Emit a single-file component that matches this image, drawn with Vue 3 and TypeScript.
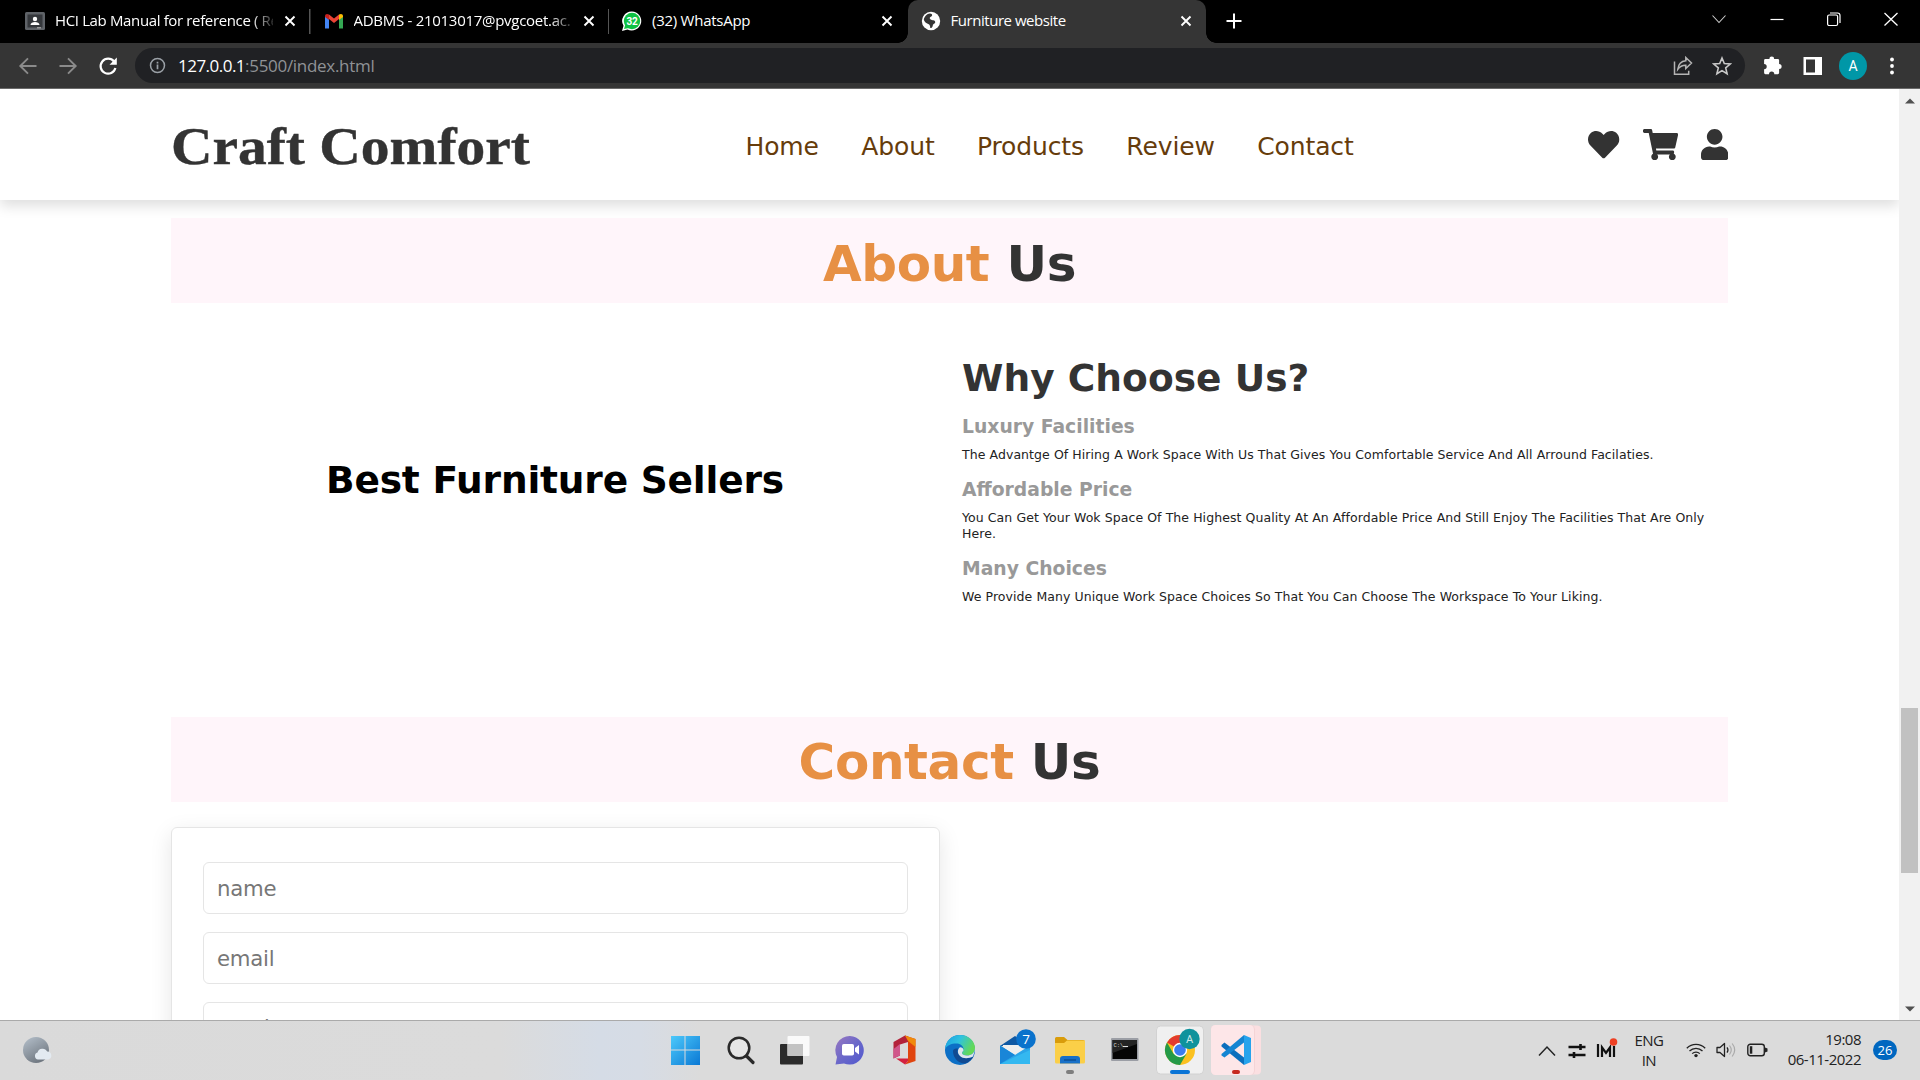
<script setup lang="ts">
interface Tab { title: string; icon: string; cls: string; active?: boolean }
const tabs: Tab[] = [
  { title: 'HCI Lab Manual for reference ( Re', icon: 'class', cls: 't1' },
  { title: 'ADBMS - 21013017@pvgcoet.ac.', icon: 'gmail', cls: 't2' },
  { title: '(32) WhatsApp', icon: 'whatsapp', cls: 't3' },
  { title: 'Furniture website', icon: 'globe', cls: 't4', active: true },
]
const links = ['Home', 'About', 'Products', 'Review', 'Contact']
const reasons = [
  { title: 'Luxury Facilities', text: 'The Advantge Of Hiring A Work Space With Us That Gives You Comfortable Service And All Arround Facilaties.' },
  { title: 'Affordable Price', text: 'You Can Get Your Wok Space Of The Highest Quality At An Affordable Price And Still Enjoy The Facilities That Are Only Here.' },
  { title: 'Many Choices', text: 'We Provide Many Unique Work Space Choices So That You Can Choose The Workspace To Your Liking.' },
]
const fields = ['name', 'email', 'number']
</script>

<template>
  <div class="screen">
    <div class="tabstrip">
      <div v-for="t in tabs" :key="t.title" class="tab" :class="[t.cls, { active: t.active }]">
        <svg class="fav" viewBox="0 0 20 20">
          <g v-if="t.icon === 'class'"><rect x="0" y="1" width="20" height="18" rx="1.5" fill="#5f6368"/><rect x="2.5" y="3.5" width="15" height="13" fill="#34373b"/><circle cx="10" cy="8" r="2.2" fill="#fff"/><path d="M5.5 14c0-4 9-4 9 0z" fill="#fff"/><rect x="12" y="16" width="4" height="1.5" fill="#999"/></g>
          <g v-else-if="t.icon === 'gmail'"><path d="M1 17.5V5l4 3v9.5z" fill="#4285f4"/><path d="M15 17.5V8l4-3v12.500z" fill="#34a853"/><path d="M5 8V3.600l5 3.900 5-3.900V8l-5 4z" fill="#ea4335"/><path d="M1 6V5C1 2.800 3.300 2.300 5 3.600V9z" fill="#c5221f"/><path d="M19 6V5c0-2.200-2.300-2.700-4-1.400V9z" fill="#fbbc04"/></g>
          <g v-else-if="t.icon === 'whatsapp'"><path d="M10 .5a9.500 9.500 0 1 1-4.500 18L0 20l1.500-5.200A9.500 9.500 0 0 1 10 .5z" fill="#fff"/><circle cx="10" cy="10" r="8.200" fill="#0fc143"/><path d="M2 18l1.500-5 3.500 4z" fill="#0fc143"/><text x="10" y="13.600" font-size="10" font-weight="700" text-anchor="middle" fill="#fff" font-family="Roboto, sans-serif">32</text></g>
          <g v-else><circle cx="10" cy="10" r="9.200" fill="#fff"/><path d="M9 2.500c3 .5 2.500 2.500.8 3.200-1.800.8-1 2-.2 2.700 1.500 1 4.500.2 4.600 2.600.1 2-2.200 1.600-2.400 3.400-.1 1.600-1.800 3.200-2.600 2.400 0-1.800-.4-3.200-2-3.800-2-.8-3.600-2-4.400-4.200C3.300 5.500 6 2.400 9 2.500z" fill="#353535"/></g>
        </svg>
        <span class="title">{{ t.title }}</span>
        <svg class="x" viewBox="0 0 12 12"><path d="M1.500 1.500l9 9M10.500 1.500l-9 9" stroke="#fff" stroke-width="1.900"/></svg>
      </div>
      <svg class="plus" viewBox="0 0 16 16"><path d="M8 .5v15M.5 8h15" stroke="#fff" stroke-width="2"/></svg>
      <div class="winctl">
        <svg viewBox="0 0 16 16"><path d="M1.500 4.500L8 11.500l6.500-7" fill="none" stroke="#ccc" stroke-width="1.100"/></svg>
        <svg viewBox="0 0 16 16"><path d="M1.500 8.500h13" stroke="#fff" stroke-width="1.200"/></svg>
        <svg viewBox="0 0 16 16"><rect x="1.600" y="4" width="10" height="10.500" rx="1.500" fill="none" stroke="#fff" stroke-width="1.200"/><path d="M4 2h7.500q2.500 0 2.500 2.500V12" fill="none" stroke="#fff" stroke-width="1.200"/></svg>
        <svg viewBox="0 0 16 16"><path d="M1.500 2l13 12.500M14.500 2L1.500 14.500" stroke="#fff" stroke-width="1.300"/></svg>
      </div>
    </div>

    <div class="toolbar">
      <svg class="tb back" viewBox="0 0 20 20"><path d="M18.500 10H2.500M10 2.300L2.300 10l7.700 7.700" fill="none" stroke="#8b8b8b" stroke-width="1.900"/></svg>
      <svg class="tb fwd" viewBox="0 0 20 20"><path d="M1.500 10h16M10 2.300l7.700 7.700-7.700 7.700" fill="none" stroke="#8b8b8b" stroke-width="1.900"/></svg>
      <svg class="tb rel" viewBox="0 0 20 20"><path d="M16 5.500A7.500 7.500 0 1 0 17.400 12" fill="none" stroke="#fff" stroke-width="2.200"/><path d="M18.800 1.500v7.300h-7.300z" fill="#fff"/></svg>
      <div class="omni">
        <svg class="info" viewBox="0 0 18 18"><circle cx="9" cy="9" r="7.400" fill="none" stroke="#9aa0a6" stroke-width="1.600"/><path d="M9 8v5M9 5v1.800" stroke="#9aa0a6" stroke-width="1.800"/></svg>
        <span class="host">127.0.0.1</span><span class="path">:5500/index.html</span>
        <svg class="share" viewBox="0 0 20 20"><path d="M1.500 5.500v12.700h14.200v-3.500" fill="none" stroke="#b4b4b4" stroke-width="1.500"/><path d="M12.800 1.500l5.700 5.500-5.700 5.500V9.300c-3.500-.1-5.700 1-8 4 .5-4.500 3-8 8-8.500z" fill="none" stroke="#b4b4b4" stroke-width="1.500"/></svg>
        <svg class="star" viewBox="0 0 20 20"><path d="M10 2l2.300 5.500 6 .5-4.600 3.900 1.400 5.800L10 14.600l-5.100 3.100 1.400-5.800L1.700 8l6-.5z" fill="none" stroke="#c8c8c8" stroke-width="1.600"/></svg>
      </div>
      <svg class="puz" viewBox="0 0 20 20"><path d="M7 3.800a2.300 2.300 0 0 1 4.600 0H15a1.300 1.300 0 0 1 1.300 1.300v3.500a2.400 2.400 0 0 1 0 4.800V17a1.300 1.300 0 0 1-1.300 1.300h-3.300a2.500 2.500 0 0 0-5 0H3.300A1.300 1.300 0 0 1 2 17v-3.500a2.500 2.500 0 0 0 0-5V5.100a1.300 1.300 0 0 1 1.300-1.300z" fill="#fff"/></svg>
      <svg class="side" viewBox="0 0 20 20"><path d="M.5 1h18.500v18H.5zM3 3.500v13h9v-13z" fill="#fff" fill-rule="evenodd"/></svg>
      <div class="avatar">A</div>
      <svg class="dots" viewBox="0 0 6 20"><g fill="#fff"><circle cx="3" cy="3.500" r="1.900"/><circle cx="3" cy="10" r="1.900"/><circle cx="3" cy="16.500" r="1.900"/></g></svg>
    </div>

    <div class="viewport">
      <div class="page">
        <header class="header">
          <div class="logo"><span>Craft Comfort</span></div>
          <nav class="nav"><a v-for="l in links" :key="l">{{ l }}</a></nav>
          <div class="icons">
            <svg width="31.250" height="31.250" viewBox="0 0 512 512"><path fill="#333" d="M462.3 62.6C407.5 15.9 326 24.3 275.7 76.2L256 96.500l-19.700-20.300C186.100 24.300 104.500 15.900 49.700 62.600c-62.800 53.600-66.100 149.800-9.900 207.900l193.500 199.800c12.500 12.900 32.800 12.900 45.300 0l193.500-199.800c56.300-58.100 53-154.300-9.800-207.900z"/></svg>
            <svg width="35.160" height="31.250" viewBox="0 0 576 512"><path fill="#333" d="M528.12 301.319l47.273-208C578.806 78.301 567.391 64 551.99 64H159.208l-9.166-44.81C147.758 8.021 137.93 0 126.529 0H24C10.745 0 0 10.745 0 24v16c0 13.255 10.745 24 24 24h69.883l70.248 343.435C147.325 417.1 136 435.222 136 456c0 30.928 25.072 56 56 56s56-25.072 56-56c0-15.674-6.447-29.835-16.824-40h209.647C430.447 426.165 424 440.326 424 456c0 30.928 25.072 56 56 56s56-25.072 56-56c0-22.172-12.888-41.332-31.579-50.405l5.517-24.276c3.413-15.018-8.002-29.319-23.403-29.319H218.117l-6.545-32h293.145c11.206 0 20.92-7.754 23.403-18.681z"/></svg>
            <svg width="27.340" height="31.250" viewBox="0 0 448 512"><path fill="#333" d="M224 256c70.700 0 128-57.300 128-128S294.700 0 224 0 96 57.300 96 128s57.300 128 128 128zm89.600 32h-16.700c-22.200 10.200-46.900 16-72.900 16s-50.600-5.800-72.900-16h-16.700C60.200 288 0 348.200 0 422.400V464c0 26.500 21.500 48 48 48h352c26.500 0 48-21.500 48-48v-41.600c0-74.200-60.200-134.400-134.400-134.400z"/></svg>
          </div>
        </header>

        <main class="main">
          <h1 class="heading about-h"><span>About</span> Us</h1>
          <section class="about">
            <div class="seller"><h3>Best Furniture Sellers</h3></div>
            <div class="why">
              <h3>Why Choose Us?</h3>
              <template v-for="r in reasons" :key="r.title">
                <h4>{{ r.title }}</h4>
                <p>{{ r.text }}</p>
              </template>
            </div>
          </section>
          <h1 class="heading contact-h"><span>Contact</span> Us</h1>
          <form class="card">
            <input v-for="f in fields" :key="f" type="text" :placeholder="f" />
          </form>
        </main>
      </div>
      <div class="scroll">
        <svg viewBox="0 0 10 6"><path d="M0 5.500L5 .5l5 5z" fill="#505050"/></svg>
        <div class="thumb"></div>
        <svg viewBox="0 0 10 6"><path d="M0 .5l5 5 5-5z" fill="#505050"/></svg>
      </div>
    </div>

    <footer class="taskbar">
      <svg class="weather" viewBox="0 0 30 30"><defs><linearGradient id="moon" x1="0" y1="0" x2=".6" y2="1"><stop offset="0" stop-color="#b6c1cc"/><stop offset="1" stop-color="#6f7780"/></linearGradient></defs><circle cx="13" cy="15" r="13" fill="url(#moon)"/><path d="M15 24.500a3.600 3.600 0 0 1-.5-7 5.200 5.200 0 0 1 9.700-.9 4 4 0 0 1 1 7.900z" fill="#e3eaf1"/></svg>
      <div class="apps">
        <svg class="app" viewBox="0 0 48 50"><defs><linearGradient id="win" x1="0" y1="0" x2="1" y2="1"><stop offset="0" stop-color="#4cc9fb"/><stop offset="1" stop-color="#0a78d4"/></linearGradient></defs><path d="M10 11h13.500v13.500H10zM24.500 11H39v13.500H24.500zM10 25.500h13.500V40H10zM24.500 25.500H39V40H24.500z" fill="url(#win)"/></svg>
        <svg class="app" viewBox="0 0 48 50"><circle cx="23" cy="23" r="10.300" fill="#e6e6e6" stroke="#2a2a2a" stroke-width="2.500"/><path d="M30.500 31l6.500 6.500" stroke="#2a2a2a" stroke-width="3.200" stroke-linecap="round"/></svg>
        <svg class="app" viewBox="0 0 48 50"><rect x="9" y="19" width="23" height="20.500" rx="1" fill="#2b2b2b"/><rect x="16.500" y="11" width="22" height="20" rx="1" fill="#fafafa"/><path d="M16.500 19H32v12H16.500z" fill="#c3c3c3"/></svg>
        <svg class="app" viewBox="0 0 48 50"><defs><linearGradient id="chat" x1="0" y1="0" x2="1" y2="1"><stop offset="0" stop-color="#9a78c0"/><stop offset=".5" stop-color="#6b68c9"/><stop offset="1" stop-color="#5058cf"/></linearGradient></defs><path d="M24 11a14.300 14.300 0 1 1-6 27.500L9.500 39.500l1.500-7.500A14.300 14.300 0 0 1 24 11z" fill="url(#chat)"/><rect x="16" y="19" width="12" height="11.500" rx="1.800" fill="#fff"/><path d="M29 23l4-3v9.500l-4-3z" fill="#fff"/></svg>
        <svg class="app" viewBox="0 0 48 50"><path d="M12.500 17L24 10.500l3 1V17l-8 2.500v11l-6.500 3z" fill="#b3223a"/><path d="M12.500 24v9.500l6.500-3V19z" fill="#d0568a"/><path d="M24 10.500l10.500 3.500v22L24 39.500l3-3.500V15z" fill="#e0440e"/><path d="M24 10.500l10.500 3.500v8L27 16z" fill="#f08a0b"/><path d="M15 33.500h12V36l-3 3.500z" fill="#d4213f"/></svg>
        <svg class="app" viewBox="0 0 48 50"><defs><linearGradient id="edg" x1="0" y1="0" x2="1" y2=".4"><stop offset="0" stop-color="#1b9de2"/><stop offset=".5" stop-color="#2fc2df"/><stop offset="1" stop-color="#63d957"/></linearGradient></defs><circle cx="24" cy="25" r="15" fill="#0c6fc6"/><path d="M9 24C10 15 16 10 24 10c9 0 15 6.500 15 13 0 5-4 7.500-8 7.500-3 0-5-1-5-2.500s1.500-1.500 1.500-4c0-3-3-5.500-7-5.500-5.500 0-9.500 2-11.500 5.500z" fill="url(#edg)"/><path d="M17 26c0 7 5.500 12.500 12 12.500 3.500-1 7-4 8.500-7-4 2-10 2.500-13.500-.5-2.500-2.200-3-4.800-2-7.500-3 0-5 .5-5 2.500z" fill="#114a92"/><path d="M26 28c0 1.500 2 2.500 5 2.500 4 0 8-2.500 8-7.500v2l-2 6.500c-4 2-10 2.500-13-.5-3-2.800-2.500-7 0-8.700 2 0 3.500 1.200 3.500 2.700 0 1.500-1.500 1.500-1.500 3z" fill="#dfe5ec"/></svg>
        <svg class="app" viewBox="0 0 48 50"><path d="M9 21l15-10 15 10z" fill="#0f59a4"/><path d="M12 20h24v13H12z" fill="#eee"/><path d="M9 20.500l15 9.500L39 20.500V39H9z" fill="#2aa5e8"/><path d="M9 39l30-14v14z" fill="#34b8f0"/><path d="M9 20.500l15 9.500L9 39z" fill="#1986d8"/><circle cx="35" cy="14" r="9.800" fill="#0a72cc"/><text x="35" y="18.700" text-anchor="middle" font-size="13.500" fill="#fff" font-family="Open Sans, sans-serif">7</text></svg>
        <svg class="app" viewBox="0 0 48 50"><path d="M9 13.500q0-1.500 1.500-1.500h7.500l3.500 3H37q2 0 2 2v6H9z" fill="#d99c0b"/><path d="M9 18h9l3-2.500h18V37q0 1.500-1.500 1.500h-27Q9 38.500 9 37z" fill="#fbcf48"/><path d="M14 38.500V34q0-3 3-3h14q3 0 3 3v4.500z" fill="#1870c8"/><path d="M18 35h12" stroke="#0b4f96" stroke-width="1.500"/><rect x="20" y="45" width="8" height="4" rx="2" fill="#7e7e7e"/></svg>
        <svg class="app" viewBox="0 0 48 50"><rect x="10" y="13" width="27.500" height="23" rx="1" fill="#9b9ea5"/><rect x="11.500" y="15" width="24.500" height="19" fill="#050505"/><path d="M11.500 15H36v4l-24.500 9z" fill="#242424"/><text x="12.500" y="21.500" font-size="5.500" fill="#ddd" font-family="Liberation Mono, monospace">C:\</text><path d="M22 21.500h5" stroke="#ddd"/></svg>
        <svg class="app" viewBox="0 0 48 50"><rect x=".5" y="1" width="47" height="48" rx="4" fill="#f0f0f0" stroke="#d2d2d2"/><circle cx="24" cy="25" r="15" fill="#fbc11f"/><path d="M24 25L11 17.500A15 15 0 0 1 37 17.500H24z" fill="#e33b2e"/><path d="M11 17.500A15 15 0 0 0 24 40l6.500-11.300L24 25l-6.500 3.700z" fill="#249a48"/><circle cx="24" cy="25" r="7.200" fill="#fff"/><circle cx="24" cy="25" r="5.800" fill="#3a7df0"/><circle cx="33.500" cy="14" r="10.200" fill="#0e929c"/><text x="33.500" y="18" text-anchor="middle" font-size="11" fill="#cfe9ea" font-family="Roboto, sans-serif">A</text><rect x="14" y="45" width="20" height="4" rx="2" fill="#0a74d6"/></svg>
        <svg class="app code" viewBox="0 0 51 50"><rect x="38" y=".5" width="12" height="49" rx="4" fill="#fbdfe1"/><rect x="0" y="0" width="44" height="50" rx="4.500" fill="#f4d4d6"/><rect x="0" y="0" width="43" height="50" rx="4.500" fill="#fde6e8"/><path d="M33 10l7 3v24l-7 3z" fill="#27a3ec"/><path d="M10.500 20l3-2.500L33 32.500V40L10.500 21.500z" fill="#0b6fbd"/><path d="M10.500 30.500V29L33 10v7.500L13.500 32.500z" fill="#1585d2"/><rect x="21" y="45" width="8" height="4" rx="2" fill="#c62a20"/></svg>
      </div>
      <div class="tray">
        <svg class="chev" viewBox="0 0 18 12"><path d="M1 10.500L9 2l8 8.500" fill="none" stroke="#222" stroke-width="1.500"/></svg>
        <svg class="slid" viewBox="0 0 18 16"><path d="M.5 4h17M.5 12h17" stroke="#111" stroke-width="2.400"/><path d="M12.500 1v6M6 9v6" stroke="#111" stroke-width="2.600"/></svg>
        <svg class="imi" viewBox="0 0 22 20"><path d="M2 6v13M18 8v11" stroke="#111" stroke-width="2.200"/><path d="M6 19V9.500l4 5.500 4-5.500V19" fill="none" stroke="#111" stroke-width="2.200"/><circle cx="17.500" cy="4" r="3.800" fill="#ee4023"/></svg>
        <div class="lang">ENG<br />IN</div>
        <svg class="wifi" viewBox="0 0 20 16"><g fill="none" stroke="#222" stroke-width="1.300"><path d="M.8 6.200a13 13 0 0 1 18.400 0"/><path d="M3.500 9a9.200 9.200 0 0 1 13 0"/><path d="M6.200 11.600a5.400 5.400 0 0 1 7.600 0"/></g><circle cx="10" cy="13.600" r="1.700" fill="#222"/></svg>
        <svg class="vol" viewBox="0 0 21 16"><path d="M1 5.500h3L8.500 1.500v13L4 10.500H1z" fill="none" stroke="#222" stroke-width="1.300" stroke-linejoin="round"/><path d="M11 5.300q2 2.700 0 5.400" fill="none" stroke="#222" stroke-width="1.200"/><path d="M13.500 3.500q3.500 4.500 0 9M16.200 1.500q5 6.500 0 13" fill="none" stroke="#aaa" stroke-width="1.200"/></svg>
        <svg class="bat" viewBox="0 0 21 14"><rect x=".8" y="1.200" width="16.500" height="11.500" rx="2.500" fill="none" stroke="#222" stroke-width="1.400"/><rect x="2.800" y="3.200" width="2.500" height="7.500" fill="#222"/><path d="M18 4.500l2.500 1v3l-2.500 1z" fill="#222"/></svg>
        <div class="clock">19:08<br />06-11-2022</div>
        <div class="notif">26</div>
      </div>
    </footer>
  </div>
</template>

<style>
body { overflow: hidden; }
</style>

<style scoped>
.screen { width: 1920px; height: 1080px; display: flex; flex-direction: column; overflow: hidden; background: #fff; font-family: "Open Sans", "Noto Sans", sans-serif; }
.screen *, .screen { box-sizing: border-box; }
svg { display: block; flex: none; }
h1, h3, h4, p { margin: 0; }

.tabstrip { height: 43px; flex: none; background: #000; display: flex; align-items: center; padding-left: 12px; }
.tab { position: relative; width: 298.500px; height: 43px; display: flex; align-items: center; padding: 0 14.500px 1px 13px; color: #fff; font-size: 15px; letter-spacing: -0.36px; }
.tab .fav { width: 20px; height: 20px; margin-right: 10px; }
.tab .title { flex: 1; overflow: hidden; white-space: nowrap; line-height: 24px; margin-top: -2px; }
.t1 .title, .t2 .title { -webkit-mask-image: linear-gradient(90deg, #000 90%, transparent 102%); mask-image: linear-gradient(90deg, #000 90%, transparent 102%); }
.t2 { letter-spacing: -0.28px; }
.t3 { letter-spacing: -0.26px; }
.t4 { letter-spacing: -0.46px; }
.tab .x { width: 12px; height: 12px; margin-left: 11px; }
.t1, .t2 { background: linear-gradient(#555, #555) no-repeat right 0 top 9px / 1.500px 25px; }
.tab.active { background: #353535; border-radius: 10px 10px 0 0; }
.tab.active::before, .tab.active::after { content: ""; position: absolute; bottom: 0; width: 10px; height: 10px; }
.tab.active::before { left: -10px; background: radial-gradient(circle at 0 0, transparent 9.500px, #353535 10px); }
.tab.active::after { right: -10px; background: radial-gradient(circle at 100% 0, transparent 9.500px, #353535 10px); }
.plus { width: 16px; height: 16px; margin-left: 20px; margin-top: -1px; }
.winctl { margin-left: auto; display: flex; gap: 41.200px; padding-right: 21px; margin-top: -6px; }
.winctl svg { width: 16px; height: 16px; }

.toolbar { height: 46px; flex: none; background: #353535; border-bottom: 1px solid #6a6a6a; display: flex; align-items: center; padding-left: 17.500px; }
.tb { width: 20px; height: 20px; }
.fwd, .rel { margin-left: 20px; }
.omni { width: 1610px; height: 35px; margin-left: 17.500px; border-radius: 18px; background: #202124; display: flex; align-items: center; padding: 0 13px 0 14px; font-size: 17px; white-space: nowrap; }
.info { width: 17px; height: 17px; margin-right: 12px; }
.host { color: #fff; letter-spacing: -0.52px; margin-top: -1px; }
.path { color: #8f9296; letter-spacing: -0.3px; margin-top: -1px; }
.share { width: 20px; height: 20px; margin-left: auto; margin-right: 19px; }
.star { width: 20px; height: 20px; }
.puz { width: 21px; height: 21px; margin-left: 17px; }
.side { width: 20px; height: 20px; margin-left: 20px; }
.avatar { width: 28px; height: 28px; margin-left: 16px; border-radius: 50%; background: #0097a7; color: #fff; font: 14px/28px Roboto, sans-serif; text-align: center; }
.dots { width: 6px; height: 20px; margin-left: 22px; }

.viewport { height: 931px; flex: none; display: flex; overflow: hidden; }
.page { width: 1899px; height: 931px; overflow: hidden; background: #fff; font-family: "DejaVu Sans", Verdana, sans-serif; }
.header { position: relative; z-index: 2; height: 111px; background: #fff; box-shadow: 0 6px 12.500px rgba(0, 0, 0, 0.13); display: flex; align-items: center; padding: 0 171px; }
.logo { width: 574.500px; flex: none; font: bold 52px/60px "Liberation Serif", serif; color: #333; white-space: nowrap; padding-top: 4px; }
.logo span { display: inline-block; transform: scaleX(1.105); transform-origin: 0 50%; -webkit-text-stroke: 0.400px #333; }
.nav { display: flex; gap: 42.400px; padding-top: 3px; font-size: 25px; letter-spacing: -0.120px; color: #663c0b; }
.icons { display: flex; gap: 23px; margin-left: auto; }

.main { padding: 18px 171px 0; }
.heading { height: 85px; background: #fff5fa; color: #333; text-align: center; font-size: 50px; line-height: 91px; letter-spacing: -0.380px; }
.about-h { line-height: 93px; }
.heading span { color: #e79044; }
.about { height: 414px; display: flex; }
.seller { width: 768px; display: flex; justify-content: center; align-items: center; padding-bottom: 61px; color: #000; }
.seller h3 { font-size: 37.500px; letter-spacing: -0.180px; }
.why { flex: 1; padding: 53px 0 0 23px; color: #333; }
.why h3 { font-size: 37.500px; line-height: 44px; letter-spacing: 0.050px; }
.why h4 { font-size: 18.750px; line-height: 24px; color: #999; margin-top: 15px; }
.why h3 + h4 { margin-top: 15.400px; }
.why p { font-size: 12.500px; line-height: 16px; color: #222; margin-top: 8px; letter-spacing: 0.072px; }
.card { width: 769px; height: 500px; margin-top: 25px; padding: 34px 31px; border: 1px solid #e5e5e5; border-radius: 6px; box-shadow: 0 6px 22px rgba(0, 0, 0, 0.1); }
.card input { display: block; width: 705px; height: 52px; margin-bottom: 18px; padding: 0 14px 0 13px; border: 1px solid #e5e5e5; border-radius: 6px; font: 21.250px "DejaVu Sans", sans-serif; letter-spacing: -0.250px; background: #fff; }
.card input:last-child { padding-bottom: 1px; }
.card input::placeholder { color: #777; }

.scroll { width: 21px; height: 931px; background: #f1f1f1; display: flex; flex-direction: column; align-items: center; padding: 9px 0 8px; }
.scroll svg { width: 10px; height: 6px; }
.thumb { width: 17px; height: 165px; margin: 604px 0 auto; background: #c1c1c1; }

.taskbar { height: 60px; flex: none; border-top: 1px solid #aaa; background: linear-gradient(90deg, #dadada 0, #dbdbdb 500px, #d5dce6 600px, #d6dce5 640px, #dbdbdb 700px, #dbdbdb 100%); display: flex; align-items: center; padding: 0 23px; position: relative; z-index: 3; }
.weather { width: 30px; height: 30px; margin-top: -1px; }
.apps { display: flex; gap: 7.050px; margin-left: 608px; margin-top: -1px; }
.app { width: 48px; height: 50px; }
.code { width: 51px; }
.tray { display: flex; align-items: center; margin-left: auto; font-size: 15px; line-height: 20px; color: #222; }
.chev { width: 18px; height: 12px; }
.slid { width: 18px; height: 16px; margin-left: 12px; }
.imi { width: 22px; height: 20px; margin: -5px 0 0 10px; }
.lang { text-align: center; margin-left: 16px; margin-top: -2px; letter-spacing: -0.600px; }
.wifi { width: 20px; height: 16px; margin: -2px 0 0 23px; }
.vol { width: 21px; height: 16px; margin: -1px 0 0 10px; }
.bat { width: 21px; height: 14px; margin: -1px 0 0 9.500px; }
.clock { text-align: right; margin-left: 20px; margin-top: -4px; letter-spacing: -0.500px; }
.notif { width: 24px; height: 20px; margin-left: 12px; margin-top: -2px; border-radius: 10px; background: #0067c0; color: #fff; font-size: 13px; text-align: center; }
</style>
